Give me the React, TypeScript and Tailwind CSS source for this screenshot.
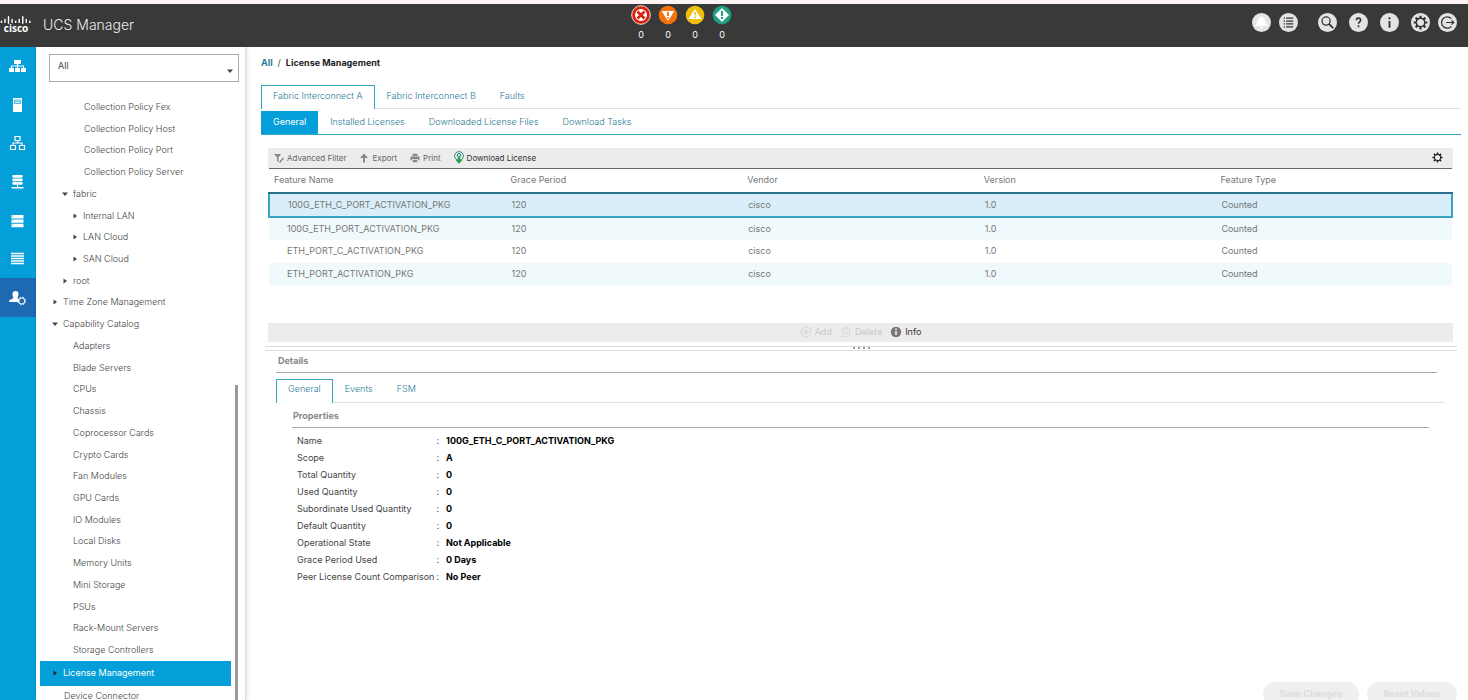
import type { ReactNode } from 'react'
import clsx from 'clsx'

type TreeNode = {
    label: string
    indent: string
    state?: 'open' | 'closed'
}

const tree: TreeNode[] = [
    { label: 'Collection Policy Fex', indent: 'pl-12' },
    { label: 'Collection Policy Host', indent: 'pl-12' },
    { label: 'Collection Policy Port', indent: 'pl-12' },
    { label: 'Collection Policy Server', indent: 'pl-12' },
    { label: 'fabric', indent: 'pl-[26px]', state: 'open' },
    { label: 'Internal LAN', indent: 'pl-9', state: 'closed' },
    { label: 'LAN Cloud', indent: 'pl-9', state: 'closed' },
    { label: 'SAN Cloud', indent: 'pl-9', state: 'closed' },
    { label: 'root', indent: 'pl-[26px]', state: 'closed' },
    { label: 'Time Zone Management', indent: 'pl-4', state: 'closed' },
    { label: 'Capability Catalog', indent: 'pl-4', state: 'open' },
    { label: 'Adapters', indent: 'pl-[37px]' },
    { label: 'Blade Servers', indent: 'pl-[37px]' },
    { label: 'CPUs', indent: 'pl-[37px]' },
    { label: 'Chassis', indent: 'pl-[37px]' },
    { label: 'Coprocessor Cards', indent: 'pl-[37px]' },
    { label: 'Crypto Cards', indent: 'pl-[37px]' },
    { label: 'Fan Modules', indent: 'pl-[37px]' },
    { label: 'GPU Cards', indent: 'pl-[37px]' },
    { label: 'IO Modules', indent: 'pl-[37px]' },
    { label: 'Local Disks', indent: 'pl-[37px]' },
    { label: 'Memory Units', indent: 'pl-[37px]' },
    { label: 'Mini Storage', indent: 'pl-[37px]' },
    { label: 'PSUs', indent: 'pl-[37px]' },
    { label: 'Rack-Mount Servers', indent: 'pl-[37px]' },
    { label: 'Storage Controllers', indent: 'pl-[37px]' },
]

const columns = ['Feature Name', 'Grace Period', 'Vendor', 'Version', 'Feature Type']

const licenses = [
    '100G_ETH_C_PORT_ACTIVATION_PKG',
    '100G_ETH_PORT_ACTIVATION_PKG',
    'ETH_PORT_C_ACTIVATION_PKG',
    'ETH_PORT_ACTIVATION_PKG',
]

const properties = [
    ['Name', '100G_ETH_C_PORT_ACTIVATION_PKG'],
    ['Scope', 'A'],
    ['Total Quantity', '0'],
    ['Used Quantity', '0'],
    ['Subordinate Used Quantity', '0'],
    ['Default Quantity', '0'],
    ['Operational State', 'Not Applicable'],
    ['Grace Period Used', '0 Days'],
    ['Peer License Count Comparison', 'No Peer'],
]

function Gear({ className }: { className: string }) {
    return (
        <svg viewBox="0 0 24 24" className={className} fill="none" stroke="currentColor" aria-hidden="true">
            <path
                d="M12 1v4M12 19v4M1 12h4M19 12h4M4.2 4.2l2.9 2.9M16.9 16.9l2.9 2.9M4.2 19.8l2.9-2.9M16.9 7.1l2.9-2.9"
                strokeWidth="3.4"
            />
            <circle cx="12" cy="12" r="6.8" strokeWidth="2.4" />
        </svg>
    )
}

function CiscoLogo() {
    // x position, top and height of every bar
    const bars = [
        [1, 5, 3], [5, 3, 5], [9, 0, 9], [13, 3, 5], [17, 5, 3],
        [21, 3, 5], [25, 0, 9], [29, 3, 5], [33, 5, 3],
    ]
    return (
        <div className="flex w-8 flex-col items-center text-white">
            <svg viewBox="0 0 35 9" className="h-2 w-8" fill="currentColor" aria-hidden="true">
                {bars.map(([x, y, h]) => (
                    <rect key={x} x={x - 0.7} y={y} width="1.6" height={h} rx=".8" />
                ))}
            </svg>
            <span className="font-['Open_Sans',sans-serif] text-[10px] leading-[9px] font-bold">cisco</span>
        </div>
    )
}

const faults: { name: string; icon: ReactNode }[] = [
    {
        name: 'Critical',
        icon: (
            <>
                <circle cx="10" cy="10" r="9.3" fill="#d9230f" stroke="#f5d9d4" strokeWidth="1" />
                <circle cx="10" cy="10" r="6" fill="#fff" />
                <path d="M6.5 6.5l7 7M13.5 6.5l-7 7" stroke="#d9230f" strokeWidth="2.6" />
            </>
        ),
    },
    {
        name: 'Major',
        icon: (
            <>
                <circle cx="10" cy="10" r="9.3" fill="#f5720a" />
                <path d="M3.5 6h13L10 16z" fill="#fff" />
                <path d="M10 7v4M10 12v1.5" stroke="#f5720a" strokeWidth="1.8" />
            </>
        ),
    },
    {
        name: 'Minor',
        icon: (
            <>
                <circle cx="10" cy="10" r="9.3" fill="#f0bf0c" />
                <path d="M10 4l6.5 10h-13z" fill="#fff" />
                <path d="M10 7v3.5M10 11.5v1.5" stroke="#f0bf0c" strokeWidth="1.6" />
            </>
        ),
    },
    {
        name: 'Warning',
        icon: (
            <>
                <circle cx="10" cy="10" r="9.3" fill="#1fa085" />
                <path d="M10 3l7 7-7 7-7-7z" fill="#fff" />
                <path d="M10 6v5M10 12v2" stroke="#1fa085" strokeWidth="2" />
            </>
        ),
    },
]

function Faults() {
    return (
        <div className="flex gap-[7px] pb-[3px]">
            {faults.map((fault) => (
                <button key={fault.name} aria-label={fault.name} className="flex w-5 flex-col items-center text-white">
                    <svg viewBox="0 0 20 20" className="size-5">{fault.icon}</svg>
                    <span className="mt-0.5 leading-4 font-normal">0</span>
                </button>
            ))}
        </div>
    )
}

function HeaderButton({ label, className, children }: { label: string; className?: string; children: ReactNode }) {
    return (
        <button
            aria-label={label}
            className={clsx('flex size-[19px] items-center justify-center rounded-full bg-[#e4e4e4] text-[#333]', className)}
        >
            {children}
        </button>
    )
}

function HeaderActions() {
    const svg = { viewBox: '0 0 20 20', className: 'size-[19px]', fill: 'none', stroke: 'currentColor', strokeWidth: 1.5 }
    return (
        <div className="flex items-center pb-1.5">
            <HeaderButton label="Notifications">
                <svg {...svg} className="size-[19px] text-white">
                    <path d="M4.5 13c2.5-2 1.5-8 5.5-8.5 4 .5 3 6.500 5.500 8.500zM8.500 15.200h3" fill="currentColor" />
                </svg>
            </HeaderButton>
            <HeaderButton label="List" className="ml-2">
                <svg {...svg}>
                    <path
                        d="M7.5 5.500h7.500M7.500 8.500h7.500M7.500 11.500h7.500M7.500 14.500h7.500M5 5.500h1.300M5 8.500h1.300M5 11.500h1.300M5 14.500h1.300"
                        strokeWidth="1.3"
                    />
                </svg>
            </HeaderButton>
            <HeaderButton label="Search" className="ml-5">
                <svg {...svg}>
                    <circle cx="8.5" cy="8.5" r="4.3" strokeWidth="1.3" />
                    <path d="M11.5 11.5l4.5 4.5" strokeWidth="1.8" />
                </svg>
            </HeaderButton>
            <HeaderButton label="Help" className="ml-3">
                <svg {...svg}>
                    <path d="M7.8 7.7c0-3 4.5-3 4.5-.3 0 1.900-2.300 1.900-2.300 4M10 13v2" strokeWidth="1.7" />
                </svg>
            </HeaderButton>
            <HeaderButton label="About" className="ml-3">
                <svg {...svg}>
                    <path d="M10 8.5v7M10 4.500v2.200" strokeWidth="2" />
                </svg>
            </HeaderButton>
            <HeaderButton label="Settings" className="ml-3">
                <Gear className="size-[15px]" />
            </HeaderButton>
            <HeaderButton label="Log out" className="ml-2">
                <svg {...svg}>
                    <path d="M14 5.800a6 6 0 1 0 0 8.400M8.500 10h8M14.200 7.800l2.400 2.200-2.400 2.200" strokeWidth="1.3" />
                </svg>
            </HeaderButton>
        </div>
    )
}

const railItems: { name: string; icon: ReactNode }[] = [
    {
        name: 'Equipment',
        icon: (
            <>
                <path d="M5 3h7v4H5zM0 11h5v4H0zM6 11h5v4H6zM12 11h5v4h-5z" fill="currentColor" />
                <path d="M8.5 6v5M2.5 11V9h12v2" fill="none" stroke="currentColor" strokeWidth="1.2" />
            </>
        ),
    },
    {
        name: 'Servers',
        icon: (
            <>
                <path d="M4 2h9v14H4z" fill="currentColor" />
                <path d="M5.5 4h6v3.5h-6zM5.5 5.7h6" fill="none" stroke="#049fd9" strokeWidth=".7" />
            </>
        ),
    },
    {
        name: 'LAN',
        icon: (
            <path
                d="M6 2.5h5v4H6zM1.5 11.5h5v4h-5zM10.5 11.5h5v4h-5zM8.5 6.5V9M4 11V9h9v2"
                fill="none"
                stroke="currentColor"
                strokeWidth="1.2"
            />
        ),
    },
    {
        name: 'SAN',
        icon: (
            <path
                d="M4 2h9l1 1-1 1.7H4L3 3zM4 5.5h9l1 1-1 1.7H4l-1-1.7zM4 9h9l1 1-1 1.7H4L3 10zM8 12h1v2h5.5v1.5h-12V14H8z"
                fill="currentColor"
            />
        ),
    },
    {
        name: 'VM',
        icon: (
            <>
                <path d="M2.5 3h12v3.4h-12zM2.5 7.4h12v3.4h-12zM2.5 11.8h12v3.4h-12z" fill="currentColor" />
                <path d="M3.5 4h1.2M3.5 8.4h1.2M3.5 12.8h1.2" stroke="#049fd9" strokeWidth=".6" />
            </>
        ),
    },
    {
        name: 'Storage',
        icon: <path d="M2 3.5h13M2 6h13M2 8.5h13M2 11h13M2 13.5h13" stroke="currentColor" strokeWidth="1.7" />,
    },
    {
        name: 'Admin',
        icon: (
            <>
                <path
                    d="M3.5 5a3 3 0 0 1 6 0c0 1.500-.5 3-1 4l1.500 1.500V13H0c0-3 3-2.500 4.500-4-.5-1-1-2.500-1-4z"
                    fill="currentColor"
                />
                <circle cx="12.8" cy="12" r="3" fill="none" stroke="currentColor" strokeWidth="1" />
                <circle cx="12.8" cy="12" r="3.9" fill="none" stroke="currentColor" strokeWidth="1" strokeDasharray="1.5 1.56" />
            </>
        ),
    },
]

function Rail() {
    return (
        <nav aria-label="Sections" className="w-9 shrink-0 bg-[#049fd9]">
            <div className="grid h-[270px] grid-rows-7">
                {railItems.map((item) => (
                    <button
                        key={item.name}
                        aria-label={item.name}
                        className={clsx('flex items-center justify-center pr-0.5 text-white', item.name === 'Admin' && 'bg-[#1d69b2]')}
                    >
                        <svg viewBox="0 0 17 18" className="h-[18px] w-[17px]">{item.icon}</svg>
                    </button>
                ))}
            </div>
        </nav>
    )
}

function Caret({ state, className }: { state: 'open' | 'closed'; className?: string }) {
    return (
        <svg viewBox="0 0 6 6" className={clsx('size-1.5 shrink-0', className)} fill="currentColor" aria-hidden="true">
            <path d={state === 'open' ? 'M0 1.5h6L3 5z' : 'M1.5 .5L5 3 1.5 5.5z'} />
        </svg>
    )
}

function Sidebar() {
    return (
        <aside className="flex w-[210px] shrink-0 flex-col border-r border-[#ddd] shadow-[1px_0_4px_rgba(0,0,0,0.15)]">
            <div className="relative mt-[7px] mr-1.5 ml-[13px] shrink-0">
                <select
                    aria-label="Filter"
                    className="block h-7 w-full appearance-none border border-[#aaa] bg-white pr-5 pb-1 pl-2 text-[9px] font-normal text-[#444]"
                >
                    <option>All</option>
                </select>
                <Caret state="open" className="pointer-events-none absolute top-3.5 right-1.5" />
            </div>
            <div className="mt-3.5 flex pr-[7px]">
                <div className="flex-1">
                    <ul className="grid h-[565px] auto-rows-fr">
                        {tree.map((node) => (
                            <li key={node.label} className={clsx('flex items-center gap-[5px]', node.indent)}>
                                {node.state && <Caret state={node.state} />}
                                <a href="#" className="whitespace-nowrap">{node.label}</a>
                            </li>
                        ))}
                    </ul>
                    <ul>
                        <li className="mr-1 ml-1 flex h-[25px] items-center gap-[5px] bg-[#049fd9] pb-0.5 pl-3 font-normal text-white">
                            <Caret state="closed" className="text-[#222]" />
                            <a href="#">License Management</a>
                        </li>
                        <li className="mt-1 pl-7">
                            <a href="#">Device Connector</a>
                        </li>
                    </ul>
                </div>
                <div className="mt-[289px] h-[315px] w-[3px] shrink-0 bg-[#999]" />
            </div>
        </aside>
    )
}

function ToolbarButton({ icon, label, dark, disabled }: { icon: ReactNode; label: string; dark?: boolean; disabled?: boolean }) {
    return (
        <button
            disabled={disabled}
            className={clsx(
                'flex items-center gap-[3px] font-normal',
                disabled ? 'text-[#c8c8c8]' : dark ? 'text-[#333]' : 'text-[#666]',
            )}
        >
            {icon}
            {label}
        </button>
    )
}

function Toolbar() {
    return (
        <div className="flex h-5 items-center bg-[#ececec] pr-2.5 pb-px pl-1.5">
            <div className="flex items-center gap-[13px] text-[8px]">
                <ToolbarButton
                    label="Advanced Filter"
                    icon={
                        <svg viewBox="0 0 10 10" className="size-2.5 text-[#888]">
                            <path d="M0 1h7L4.5 4.5V9L3 8V4.5z" fill="currentColor" />
                            <path d="M5.5 9.5L9.5 5" stroke="currentColor" strokeWidth="1.5" />
                        </svg>
                    }
                />
                <ToolbarButton
                    label="Export"
                    icon={
                        <svg viewBox="0 0 10 10" className="size-2.5 text-[#888]">
                            <path d="M5 .5L9 5H6v4.5H4V5H1z" fill="currentColor" />
                        </svg>
                    }
                />
                <ToolbarButton
                    label="Print"
                    icon={
                        <svg viewBox="0 0 10 10" className="size-2.5 text-[#888]" fill="currentColor">
                            <path d="M2.5 .8h5V3h-5zM.5 3.5h9v3.8H8V6H2v1.3H.5zM2.8 6.8h4.4V9.3H2.8z" />
                        </svg>
                    }
                />
                <ToolbarButton
                    dark
                    label="Download License"
                    icon={
                        <svg viewBox="0 0 10 13" className="h-[13px] w-2.5">
                            <circle cx="5" cy="5" r="4.4" fill="#dff0e8" stroke="#3c8a88" />
                            <circle cx="5" cy="4.2" r="1.7" fill="none" stroke="#267a70" />
                            <path d="M3.5 6.5h3V9H8.5L5 12.8 1.5 9h2z" fill="#2f9e44" />
                        </svg>
                    }
                />
            </div>
            <button aria-label="Table settings" className="ml-auto text-[#222]">
                <Gear className="size-[11px]" />
            </button>
        </div>
    )
}

function LicenseTable() {
    return (
        <table className="w-full table-fixed border-collapse text-left font-normal text-[#777]">
            <thead>
                <tr className="h-6 border-t border-b-2 border-t-[#666] border-b-[#2b6f8f]">
                    {columns.map((column) => (
                        <th key={column} className="pl-[5px] font-normal">{column}</th>
                    ))}
                </tr>
            </thead>
            <tbody>
                {licenses.map((name, i) => (
                    <tr
                        key={name}
                        className={clsx(
                            i === 0 ? 'h-6 border-2 border-[#35a4bf] bg-[#d9eef8]' : 'h-[23px]',
                            i % 2 === 1 && 'bg-[#f0f9fc]',
                        )}
                    >
                        <td className="pl-[18px]">{name}</td>
                        <td className="pl-1.5">120</td>
                        <td className="pl-1.5">cisco</td>
                        <td className="pl-1.5">1.0</td>
                        <td className="pl-1.5">Counted</td>
                    </tr>
                ))}
            </tbody>
        </table>
    )
}

function TableActions() {
    return (
        <div className="mt-[37px] flex h-[19px] items-center justify-center gap-2 bg-[#ececec]">
            <ToolbarButton
                disabled
                label="Add"
                icon={
                    <svg viewBox="0 0 12 12" className="size-3" fill="none" stroke="currentColor" strokeWidth=".7">
                        <circle cx="6" cy="6" r="5" />
                        <path d="M6 3v6M3 6h6" />
                    </svg>
                }
            />
            <ToolbarButton
                disabled
                label="Delete"
                icon={
                    <svg viewBox="0 0 12 12" className="size-3 text-[#d8d8d8]" fill="none" stroke="currentColor">
                        <path d="M1.5 3h9M4.5 3V1.5h3V3M2.5 3.5v7h7v-7M5 5v4M7 5v4" strokeWidth=".7" />
                    </svg>
                }
            />
            <ToolbarButton
                dark
                label="Info"
                icon={
                    <svg viewBox="0 0 12 12" className="size-3">
                        <circle cx="6" cy="6" r="5.2" fill="#777" />
                        <path d="M6 5v4M6 2.5v1.5" stroke="#fff" strokeWidth="1.5" />
                    </svg>
                }
            />
        </div>
    )
}

function Tabs({ tabs }: { tabs: string[] }) {
    return (
        <div role="tablist" className="flex h-6 border-b border-[#e2e2e2] text-[#1f7a96]">
            {tabs.map((tab, i) => (
                <button
                    key={tab}
                    role="tab"
                    aria-selected={i === 0}
                    className={clsx(
                        'h-6 border border-b-0 px-[11px] pb-1 whitespace-nowrap',
                        i === 0 ? 'border-[#35a4bf] bg-white' : 'border-transparent',
                    )}
                >
                    {tab}
                </button>
            ))}
        </div>
    )
}

function SubTabs() {
    const tabs = ['General', 'Installed Licenses', 'Downloaded License Files', 'Download Tasks']
    return (
        <div role="tablist" className="mt-0.5 flex h-6 border-b border-[#35a4bf] text-[#1f7a96]">
            {tabs.map((tab, i) => (
                <button
                    key={tab}
                    role="tab"
                    aria-selected={i === 0}
                    className={clsx('px-3 pb-0.5 whitespace-nowrap', i === 0 && 'bg-[#049fd9] font-normal text-white')}
                >
                    {tab}
                </button>
            ))}
        </div>
    )
}

function Details() {
    return (
        <section className="mr-4 ml-[15px]">
            <h2 className="mt-1 mr-2 h-[18px] border-b border-[#aaa] pl-0.5 leading-3 font-bold text-[#888]">
                Details
            </h2>
            <div className="mt-1.5">
                <Tabs tabs={['General', 'Events', 'FSM']} />
            </div>
            <div className="mr-4 ml-4">
                <h3 className="mt-[7px] h-[18px] border-b border-[#aaa] pl-px leading-3 font-bold text-[#888]">Properties</h3>
                <dl className="mt-[5px] pl-[5px] font-normal">
                    {properties.map(([name, value]) => (
                        <div key={name} className="flex h-[17px] items-center">
                            <dt className="flex w-[142px] justify-between whitespace-nowrap">
                                {name}
                                <span>:</span>
                            </dt>
                            <dd className="pl-[7px] font-bold text-black">{value}</dd>
                        </div>
                    ))}
                </dl>
            </div>
        </section>
    )
}

export default function App() {
    return (
        <div className="flex h-screen flex-col overflow-hidden bg-white font-['Inter','Liberation_Sans',sans-serif] text-[9px] leading-3 font-light text-[#444]">
            <header className="flex h-[47px] shrink-0 items-center justify-between border-t-4 border-[#fbf3f4] bg-[#393939] pr-[11px]">
                <div className="flex flex-1 items-center pb-0.5">
                    <CiscoLogo />
                    <h1 className="ml-[11px] text-sm font-light text-[#ececec]">UCS Manager</h1>
                </div>
                <div className="pr-[94px]">
                    <Faults />
                </div>
                <div className="flex flex-1 justify-end">
                    <HeaderActions />
                </div>
            </header>
            <div className="flex min-h-0 flex-1">
                <Rail />
                <Sidebar />
                <main className="flex min-w-0 flex-1 flex-col pr-[7px] pl-[15px]">
                    <nav aria-label="Breadcrumb" className="mt-2.5 flex gap-1 font-bold">
                        <a href="#" className="text-[#1f7a96]">All</a>
                        <span className="px-px font-normal">/</span>
                        <span className="text-[#222]">License Management</span>
                    </nav>
                    <div className="mt-4">
                        <Tabs tabs={['Fabric Interconnect A', 'Fabric Interconnect B', 'Faults']} />
                    </div>
                    <SubTabs />
                    <div className="mt-[13px] mr-2 ml-[7px]">
                        <Toolbar />
                        <LicenseTable />
                        <TableActions />
                    </div>
                    <div className="mt-1 mr-1 ml-1 flex h-[5px] shrink-0 items-center justify-center gap-[3px] border-y border-[#ddd]">
                        {[0, 1, 2, 3].map((dot) => (
                            <span key={dot} className="size-0.5 bg-[#999]" />
                        ))}
                    </div>
                    <Details />
                    <div className="mt-auto mr-1 flex h-[18px] shrink-0 items-start justify-end gap-2 text-[#dcdcdc]">
                        <button disabled className="h-6 w-24 shrink-0 rounded-full bg-[#efefef] font-bold">Save Changes</button>
                        <button disabled className="h-6 w-[90px] shrink-0 rounded-full bg-[#efefef] font-bold">Reset Values</button>
                    </div>
                </main>
            </div>
        </div>
    )
}
